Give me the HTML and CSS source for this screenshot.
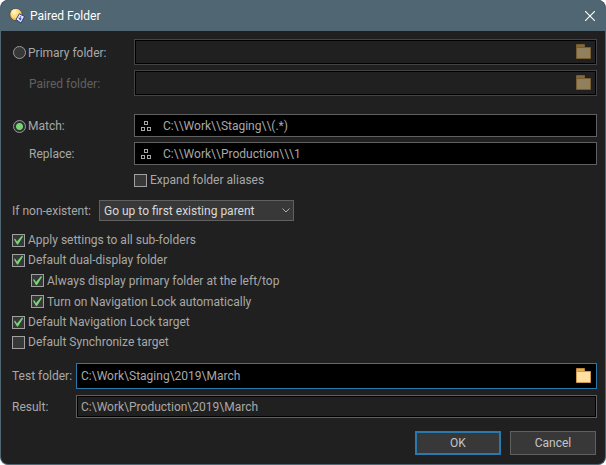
FILE: index.html
```html
<!DOCTYPE html>
<html lang="en">
<head>
<meta charset="utf-8">
<meta name="viewport" content="width=device-width, initial-scale=1">
<title>Paired Folder</title>
<link rel="stylesheet" href="styles.css">
</head>
<body>
<svg class="defs" aria-hidden="true">
  <symbol id="folder" viewBox="0 0 15 15">
    <path class="tab" d="M.5 3.5v-3h8v3z"/>
    <path class="sheet" d="M.5 3.5h14v11H.5z"/>
  </symbol>
  <symbol id="tree" viewBox="0 0 10 10">
    <path d="M3.5.5h3v3h-3zM.5 6.5h3v3h-3zM6.5 6.5h3v3h-3z" fill="none" stroke="#a8a8a8"/>
  </symbol>
</svg>
<main class="dialog">
  <header class="titlebar">
    <svg class="logo" viewBox="0 0 16 16" aria-hidden="true">
      <circle cx="7" cy="6.500" r="6.200" fill="#f6c24e" stroke="#3a4468" stroke-width=".8"/>
      <circle cx="6.300" cy="5.500" r="4.600" fill="#ffdf7e"/>
      <circle cx="5.300" cy="4.300" r="2.400" fill="#fff2b8"/>
      <path d="M10.300 5.800l5.200 2.700-3.500 6.500-5-3.500z" fill="#e8eaf8" stroke="#27346d" stroke-width=".9"/>
      <path d="M9.300 9.500l1.700 3.300 1.800-2.300z" fill="#3549c4"/>
      <circle cx="11.500" cy="9" r=".8" fill="#3549c4"/>
    </svg>
    <h1 class="title">Paired Folder</h1>
    <button class="close" type="button" aria-label="Close">
      <svg viewBox="0 0 10 10"><path d="M0 0l10 10M10 0L0 10" stroke="#fff" stroke-width="1.100"/></svg>
    </button>
  </header>
  <form class="form">
    <div class="fields">
      <div class="choice"><input class="radio" type="radio" name="mode" id="primary-mode"><label for="primary-mode">Primary folder:</label></div>
      <div class="box tall disabled"><input class="text" type="text" aria-label="Primary folder" disabled><button class="browse" type="button" aria-label="Browse for primary folder" disabled><svg><use href="#folder"/></svg></button></div>
      <label class="indent dim" for="paired">Paired folder:</label>
      <div class="box tall disabled"><input class="text" type="text" id="paired" disabled><button class="browse" type="button" aria-label="Browse for paired folder" disabled><svg><use href="#folder"/></svg></button></div>
    </div>
    <div class="fields">
      <div class="choice"><input class="radio" type="radio" name="mode" id="match-mode" checked><label for="match-mode">Match:</label></div>
      <div class="box"><svg class="tree"><use href="#tree"/></svg><input class="text" type="text" aria-label="Match" value="C:\\Work\\Staging\\(.*)"></div>
      <label class="indent" for="replace">Replace:</label>
      <div class="box"><svg class="tree"><use href="#tree"/></svg><input class="text" type="text" id="replace" value="C:\\Work\\Production\\\1"></div>
      <label class="check aliases"><input type="checkbox">Expand folder aliases</label>
    </div>
    <div class="fallback">
      <label for="missing">If non-existent:</label>
      <span class="select-wrap">
        <select id="missing"><option>Go up to first existing parent</option></select>
        <svg class="arrow" viewBox="0 0 8 5" aria-hidden="true"><path d="M.5.5L4 4 7.500.5" fill="none" stroke="#b0b0b0"/></svg>
      </span>
    </div>
    <div class="options">
      <label class="check"><input type="checkbox" checked>Apply settings to all sub-folders</label>
      <label class="check"><input type="checkbox" checked>Default dual-display folder</label>
      <div class="sub">
        <label class="check"><input type="checkbox" checked>Always display primary folder at the left/top</label>
        <label class="check"><input type="checkbox" checked>Turn on Navigation Lock automatically</label>
      </div>
      <label class="check"><input type="checkbox" checked>Default Navigation Lock target</label>
      <label class="check"><input type="checkbox">Default Synchronize target</label>
    </div>
    <div class="test">
      <label for="test">Test folder:</label>
      <div class="box tall active"><input class="text" type="text" id="test" value="C:\Work\Staging\2019\March"><button class="browse" type="button" aria-label="Browse for test folder"><svg><use href="#folder"/></svg></button></div>
      <label for="result">Result:</label>
      <div class="box readonly"><input class="text" type="text" id="result" value="C:\Work\Production\2019\March" readonly></div>
    </div>
    <footer class="actions">
      <button class="btn primary" type="submit">OK</button>
      <button class="btn" type="button">Cancel</button>
    </footer>
  </form>
</main>
</body>
</html>
```
FILE: styles.css
```css
* { box-sizing: border-box; }
body {
  margin: 0;
  background: #fff;
  color: #a8a8a8;
  font: 12px/16px Roboto, "Segoe UI", sans-serif;
}
input, select, button { font: inherit; color: inherit; margin: 0; }
svg { display: block; flex: none; }
.defs { position: absolute; width: 0; height: 0; }

.dialog {
  min-height: 100vh;
  border: 1px solid #506672;
  border-top: 0;
  border-radius: 8px;
  background: #202020;
  overflow: hidden;
}
.titlebar {
  display: flex;
  align-items: center;
  height: 31px;
  padding: 0 10px 0 8px;
  background: #506672;
  color: #fff;
}
.logo { width: 16px; height: 16px; }
.title { flex: 1; margin: 0 0 0 5px; font-size: 12px; font-weight: 400; }
.close { padding: 0; border: 0; background: none; }
.close svg { width: 10px; height: 10px; }

.form { padding: 8px 8px 9px 11px; }
.fields {
  display: grid;
  grid-template-columns: 122px 1fr;
  gap: 5px 0;
  align-items: center;
  margin-bottom: 18px;
}
.fields + .fields { margin-bottom: 10px; }
.choice { display: flex; align-items: center; gap: 2px; padding: 1px 0 0 1px; }
.indent { padding: 1px 0 0 17px; }
.dim { color: #606060; }

.radio {
  appearance: none;
  width: 13px;
  height: 13px;
  border: 1px solid #9a9a9a;
  border-radius: 50%;
  background: #383838;
}
.radio:checked { background: radial-gradient(circle, #76d676 0 3px, #303030 4px); }

.box {
  display: flex;
  align-items: center;
  height: 23px;
  min-width: 0;
  border: 1px solid #606060;
  background: #000;
}
.box.tall { height: 26px; padding-right: 5px; }
.box.disabled { border-color: #444; background: #202020; box-shadow: inset 0 0 0 1px #000; }
.box.readonly { background: #202020; box-shadow: inset 0 0 0 1px #000; }
.box.active { border-color: #2b78ad; }
.text {
  flex: 1;
  min-width: 0;
  height: 16px;
  padding: 0 4px;
  border: 0;
  outline: 0;
  background: none;
}
.tree { width: 10px; height: 10px; margin: 1px 7px 0 6px; shape-rendering: crispEdges; }
.tree + .text { padding-left: 5px; }
.browse {
  --tab: #e8ac58;
  --tab-edge: #c28a3c;
  --sheet: #ffe0a0;
  --sheet-edge: #cf9a50;
  padding: 0 0 1px;
  border: 0;
  background: none;
}
.browse:disabled {
  --tab: #84683c;
  --tab-edge: #765c30;
  --sheet: #90805c;
  --sheet-edge: #765c30;
}
.browse svg { width: 15px; height: 15px; }
.tab { fill: var(--tab); stroke: var(--tab-edge); }
.sheet { fill: var(--sheet); stroke: var(--sheet-edge); }

.check { display: flex; align-items: center; gap: 3px; height: 20px; }
.check input {
  appearance: none;
  width: 13px;
  height: 13px;
  border: 1px solid #a0a0a0;
  background: #383838;
}
.check input:checked::before {
  content: "";
  display: block;
  height: 11px;
  background: #76d676;
  clip-path: polygon(1px 5px, 2px 4px, 4px 7px, 9px 1px, 10px 2px, 5px 10px, 4px 10px);
}
.aliases { grid-column: 2; }
.sub { padding-left: 19px; }
.sub .check { height: 21px; }

.fallback { display: grid; grid-template-columns: 87px 1fr; align-items: center; margin-bottom: 9px; }
.select-wrap { position: relative; width: 195px; }
select {
  display: block;
  appearance: none;
  width: 100%;
  height: 21px;
  padding: 0 20px 0 4px;
  border: 1px solid #606060;
  border-radius: 0;
  background: #383838;
  color: #d8d8d8;
}
.arrow { position: absolute; right: 4px; top: 8px; width: 8px; height: 5px; }

.test {
  display: grid;
  grid-template-columns: 64px 1fr;
  gap: 6px 0;
  align-items: center;
  margin: 11px 0 13px;
}
.test label { white-space: nowrap; }
.actions { display: flex; justify-content: flex-end; gap: 9px; padding-right: 1px; }
.btn {
  width: 86px;
  height: 24px;
  padding: 0;
  border: 1px solid #606060;
  background: #383838;
  color: #c4c4c4;
}
.btn.primary { border: 2px solid #2b78ad; }
```
